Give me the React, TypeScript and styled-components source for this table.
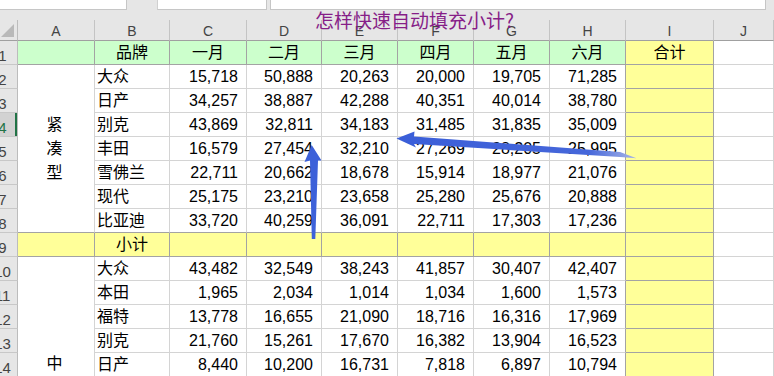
import { Fragment } from "react";
import styled, { createGlobalStyle } from "styled-components";

const GlobalStyle = createGlobalStyle`
  html, body {
    margin: 0;
    padding: 0;
    background: #fff;
    overflow: hidden;
  }
  body {
    font-family: "Liberation Sans", "Noto Sans CJK SC", sans-serif;
  }
`;

const GRID = "#d4d4d4";
const BOX = "#a3a3a3";
const HEAD_BG = "#e6e6e6";
const GREEN = "#ccffcc";
const YELLOW = "#ffff99";

const letters = ["A", "B", "C", "D", "E", "F", "G", "H", "I", "J"];
const months = ["一月", "二月", "三月", "四月", "五月", "六月"];

type Row = {
  n: number;
  kind: "head" | "data" | "sub";
  brand?: string;
  values?: number[];
};

const rows: Row[] = [
  { n: 1, kind: "head" },
  { n: 2, kind: "data", brand: "大众", values: [15718, 50888, 20263, 20000, 19705, 71285] },
  { n: 3, kind: "data", brand: "日产", values: [34257, 38887, 42288, 40351, 40014, 38780] },
  { n: 4, kind: "data", brand: "别克", values: [43869, 32811, 34183, 31485, 31835, 35009] },
  { n: 5, kind: "data", brand: "丰田", values: [16579, 27454, 32210, 27269, 28205, 25995] },
  { n: 6, kind: "data", brand: "雪佛兰", values: [22711, 20662, 18678, 15914, 18977, 21076] },
  { n: 7, kind: "data", brand: "现代", values: [25175, 23210, 23658, 25280, 25676, 20888] },
  { n: 8, kind: "data", brand: "比亚迪", values: [33720, 40259, 36091, 22711, 17303, 17236] },
  { n: 9, kind: "sub" },
  { n: 10, kind: "data", brand: "大众", values: [43482, 32549, 38243, 41857, 30407, 42407] },
  { n: 11, kind: "data", brand: "本田", values: [1965, 2034, 1014, 1034, 1600, 1573] },
  { n: 12, kind: "data", brand: "福特", values: [13778, 16655, 21090, 18716, 16316, 17969] },
  { n: 13, kind: "data", brand: "别克", values: [21760, 15261, 17670, 16382, 13904, 16523] },
  { n: 14, kind: "data", brand: "日产", values: [8440, 10200, 16731, 7818, 6897, 10794] },
];

// merged cells in column A: start row -> [rows spanned, text, align]
const merged: Record<number, { span: number; text: string; end?: boolean }> = {
  2: { span: 7, text: "紧\n凑\n型" },
  10: { span: 5, text: "中", end: true },
};

// cells that carry a thin formatted border (row 1, row 9, column I)
const boxed = (r: number, c: number) =>
  ((r === 1 || r === 9) && c <= 8) || (c === 8 && r >= 1 && r <= 14);

const bgFor = (r: number, c: number) => {
  if (c === 9) return "#fff";
  if (c === 8) return YELLOW;
  if (r === 1) return GREEN;
  if (r === 9) return YELLOW;
  return "#fff";
};

const fmt = (v: number) => v.toLocaleString("en-US");

export default function App() {
  const renderRow = (row: Row) => {
    const r = row.n;
    const cells = [];
    for (let c = 0; c < 10; c++) {
      const rb = boxed(r, c) || boxed(r, c + 1) ? BOX : GRID;
      const bb = boxed(r, c) || boxed(r + 1, c) ? BOX : GRID;

      if (c === 0 && row.kind === "data") {
        const m = merged[r];
        if (!m) continue; // covered by a merged cell above
        const last = r + m.span - 1;
        cells.push(
          <MergedCell
            key={c}
            $span={m.span}
            $end={m.end}
            $rb={GRID}
            $bb={boxed(last + 1, 0) ? BOX : GRID}
          >
            {m.text}
          </MergedCell>
        );
        continue;
      }

      let text = "";
      let align: "left" | "center" | "right" = "right";
      if (row.kind === "head") {
        align = "center";
        if (c === 1) text = "品牌";
        else if (c >= 2 && c <= 7) text = months[c - 2];
        else if (c === 8) text = "合计";
      } else if (row.kind === "sub") {
        align = "center";
        if (c === 1) text = "小计";
      } else {
        if (c === 1) {
          text = row.brand || "";
          align = "left";
        } else if (c >= 2 && c <= 7 && row.values) {
          text = fmt(row.values[c - 2]);
        }
      }

      cells.push(
        <Cell key={c} $bg={bgFor(r, c)} $align={align} $rb={rb} $bb={bb}>
          {text}
        </Cell>
      );
    }
    return (
      <Fragment key={r}>
        <RowHead $active={r === 4}>{r}</RowHead>
        {cells}
      </Fragment>
    );
  };

  return (
    <>
      <GlobalStyle />
      <Page>
        <FormulaBar>
          <NameBox />
          <BarGap $w={30} />
          <FxBox />
          <BarGap $w={3} />
          <InputBox />
        </FormulaBar>
        <Strip />
        <Sheet>
          <Corner>
            <Triangle />
          </Corner>
          {letters.map((l) => (
            <ColHead key={l}>{l}</ColHead>
          ))}
          {rows.map(renderRow)}
        </Sheet>
        <Title>怎样快速自动填充小计?</Title>
        <Overlay viewBox="0 0 774 376" width="774" height="376">
          <defs>
            <linearGradient id="fade" x1="396" y1="0" x2="637" y2="0" gradientUnits="userSpaceOnUse">
              <stop offset="0" stopColor="#3a5ed8" />
              <stop offset="0.8" stopColor="#4667da" />
              <stop offset="1" stopColor="#a9b7e8" />
            </linearGradient>
          </defs>
          <polygon
            points="311.7,145 321.5,160.5 318,160.5 315.3,239 311.8,239 310,160.5 304.5,162"
            fill="#3d61d9"
          />
          <polygon
            points="396.5,138.5 414.5,131.5 414,136.5 620,152 636.5,158.3 620,157 414,144 416,147.5"
            fill="url(#fade)"
          />
        </Overlay>
      </Page>
    </>
  );
}

const Page = styled.div`
  position: relative;
  width: 774px;
  height: 376px;
  overflow: hidden;
  background: #fff;
`;

const FormulaBar = styled.div`
  display: flex;
  height: 10px;
  background: ${HEAD_BG};
`;

const NameBox = styled.div`
  box-sizing: border-box;
  width: 127px;
  background: #fff;
  border-right: 1px solid #c6c6c6;
  border-bottom: 1px solid #c6c6c6;
`;

const BarGap = styled.div<{ $w: number }>`
  width: ${(p) => p.$w}px;
`;

const FxBox = styled.div`
  box-sizing: border-box;
  width: 110px;
  background: #fff;
  border-left: 1px solid #d0d0d0;
  border-right: 1px solid #c6c6c6;
  border-bottom: 1px solid #c6c6c6;
`;

const InputBox = styled.div`
  box-sizing: border-box;
  flex: 1;
  margin-right: 8px;
  background: #fff;
  border-left: 1px solid #c6c6c6;
  border-right: 1px solid #c6c6c6;
  border-bottom: 1px solid #c6c6c6;
`;

const Strip = styled.div`
  height: 10px;
  background: ${HEAD_BG};
`;

const Sheet = styled.div`
  display: grid;
  grid-template-columns: 30px 77px 75px 77px 75px 76px 76px 76px 76px 88px 1fr;
  grid-template-rows: 21px;
  grid-auto-rows: 24px;
  width: 786px;
  margin-left: -12px;
`;

const Corner = styled.div`
  box-sizing: border-box;
  display: flex;
  align-items: flex-end;
  justify-content: flex-end;
  padding: 0 3px 3px 0;
  background: ${HEAD_BG};
  border-right: 1px solid #bcbcbc;
  border-bottom: 1px solid #a0a0a0;
`;

const Triangle = styled.div`
  width: 0;
  height: 0;
  border-left: 13px solid transparent;
  border-bottom: 13px solid #b9b9b9;
`;

const ColHead = styled.div`
  box-sizing: border-box;
  background: ${HEAD_BG};
  border-right: 1px solid #c4c4c4;
  border-bottom: 1px solid #a0a0a0;
  text-align: center;
  font-size: 14px;
  line-height: 17px;
  padding-top: 3px;
  color: #444;
`;

const RowHead = styled.div<{ $active?: boolean }>`
  box-sizing: border-box;
  overflow: hidden;
  background: ${(p) => (p.$active ? "#d2d2d2" : HEAD_BG)};
  border-right: 1px solid #bcbcbc;
  border-bottom: 1px solid #c8c8c8;
  box-shadow: ${(p) => (p.$active ? "inset -2px 0 0 #217346" : "none")};
  text-align: center;
  font-size: 15px;
  line-height: 20px;
  padding-top: 5px;
  color: ${(p) => (p.$active ? "#217346" : "#444")};
`;

const Cell = styled.div<{
  $bg: string;
  $align: "left" | "center" | "right";
  $rb: string;
  $bb: string;
}>`
  box-sizing: border-box;
  display: flex;
  align-items: center;
  justify-content: ${(p) =>
    p.$align === "left" ? "flex-start" : p.$align === "center" ? "center" : "flex-end"};
  padding: 0 ${(p) => (p.$align === "right" ? 8 : 0)}px 0 ${(p) => (p.$align === "left" ? 2 : 0)}px;
  background: ${(p) => p.$bg};
  border-right: 1px solid ${(p) => p.$rb};
  border-bottom: 1px solid ${(p) => p.$bb};
  font-size: 16px;
  line-height: 24px;
  color: #000;
  white-space: nowrap;
  overflow: hidden;
`;

const MergedCell = styled.div<{ $span: number; $end?: boolean; $rb: string; $bb: string }>`
  box-sizing: border-box;
  grid-row: span ${(p) => p.$span};
  display: flex;
  flex-direction: column;
  align-items: center;
  justify-content: ${(p) => (p.$end ? "flex-end" : "center")};
  padding-right: 3px;
  background: #fff;
  border-right: 1px solid ${(p) => p.$rb};
  border-bottom: 1px solid ${(p) => p.$bb};
  font-size: 16px;
  line-height: 24px;
  white-space: pre-line;
  text-align: center;
  color: #000;
`;

const Title = styled.div`
  position: absolute;
  top: 10px;
  left: 315px;
  font-family: "Noto Sans CJK SC", sans-serif;
  font-size: 19px;
  line-height: 19px;
  color: #861e88;
  white-space: nowrap;
`;

const Overlay = styled.svg`
  position: absolute;
  left: 0;
  top: 0;
  pointer-events: none;
`;
